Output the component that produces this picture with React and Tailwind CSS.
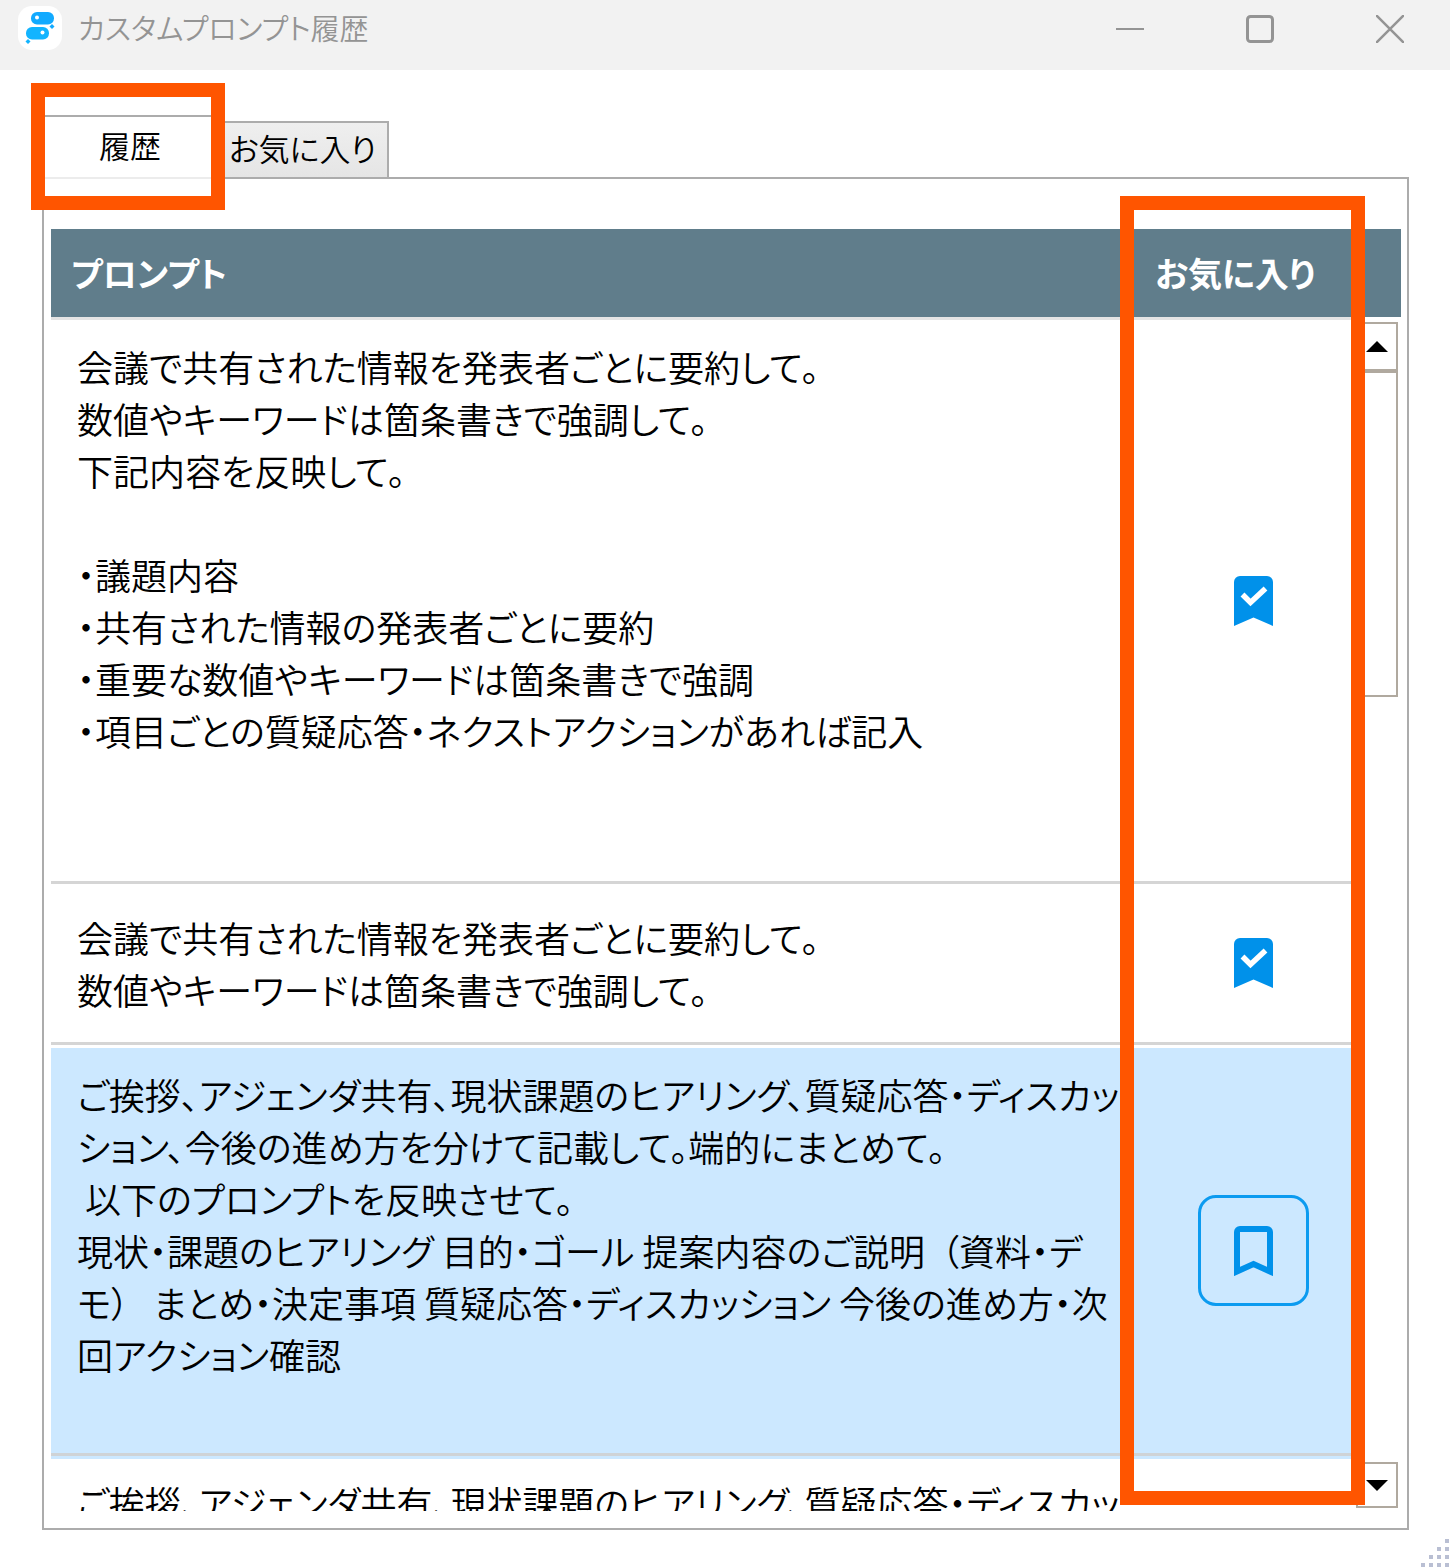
import { useState } from 'react'

const PROMPTS = [
  {
    id: 1,
    favorite: true,
    text: `会議で共有された情報を発表者ごとに要約して。
数値やキーワードは箇条書きで強調して。
下記内容を反映して。

・議題内容
・共有された情報の発表者ごとに要約
・重要な数値やキーワードは箇条書きで強調
・項目ごとの質疑応答・ネクストアクションがあれば記入

\u200b`,
  },
  {
    id: 2,
    favorite: true,
    text: `会議で共有された情報を発表者ごとに要約して。
数値やキーワードは箇条書きで強調して。`,
  },
  {
    id: 3,
    favorite: false,
    text: `ご挨拶、アジェンダ共有、現状課題のヒアリング、質疑応答・ディスカッ
ション、今後の進め方を分けて記載して。端的にまとめて。
 以下のプロンプトを反映させて。
現状・課題のヒアリング 目的・ゴール 提案内容のご説明  （資料・デ
モ）   まとめ・決定事項 質疑応答・ディスカッション 今後の進め方・次
回アクション確認
\u200b`,
  },
  {
    id: 4,
    favorite: false,
    text: `ご挨拶、アジェンダ共有、現状課題のヒアリング、質疑応答・ディスカッ

\u200b`,
  },
]

function AppIcon() {
  return (
    <svg width="44" height="44" viewBox="0 0 44 44" aria-hidden="true">
      <rect width="44" height="44" rx="14" fill="#fff" />
      <rect x="13" y="6" width="23" height="12.5" rx="6" fill="#12aaff" />
      <rect x="8" y="21" width="23" height="12.5" rx="6" fill="#12b4ff" />
      <circle cx="19" cy="11.5" r="2" fill="#fff" />
      <circle cx="24.5" cy="26.5" r="2" fill="#fff" />
      <path d="M34 18l2.5 2.5L34 23l-2.5-2.5Z" fill="#12aaff" />
      <path d="M10 33l2.5 2.5L10 38l-2.5-2.5Z" fill="#12b4ff" />
    </svg>
  )
}

function Bookmark({ filled }) {
  return (
    <svg width="39" height="50" viewBox="0 0 39 50" aria-hidden="true">
      {filled ? (
        <>
          <path d="M0 50V6a6 6 0 0 1 6-6h27a6 6 0 0 1 6 6v44L19.5 41.5Z" fill="#0091ea" />
          <path d="M8.5 18.5l8 8L31.5 12.5" fill="none" stroke="#fff" strokeWidth="5.5" />
        </>
      ) : (
        <path
          d="M3 45.5V6a3 3 0 0 1 3-3h27a3 3 0 0 1 3 3v39.5L19.5 38Z"
          fill="none"
          stroke="#0091ea"
          strokeWidth="6"
        />
      )}
    </svg>
  )
}

function TitleBar() {
  return (
    <header className="flex h-[70px] shrink-0 items-start justify-between bg-[#f2f2f2] pt-[6px] pr-[28px] pl-[18px] text-[#949494]">
      <div className="flex items-center gap-[16px]">
        <AppIcon />
        <h1 className="pb-[2px] text-[29px] leading-[42px] font-[350]">カスタムプロンプト履歴</h1>
      </div>
      <div className="flex h-[46px] items-center gap-[66px]">
        <button type="button" aria-label="最小化" className="flex w-[64px] justify-center">
          <svg width="28" height="28" viewBox="0 0 28 28" stroke="currentColor" strokeWidth="2">
            <path d="M0 14h28" />
          </svg>
        </button>
        <button type="button" aria-label="最大化" className="flex w-[64px] justify-center">
          <svg width="28" height="28" viewBox="0 0 28 28" fill="none" stroke="currentColor" strokeWidth="3">
            <rect x="1.5" y="1.5" width="25" height="25" rx="3" />
          </svg>
        </button>
        <button type="button" aria-label="閉じる" className="flex w-[64px] justify-center">
          <svg width="28" height="28" viewBox="0 0 28 28" stroke="currentColor" strokeWidth="2.5">
            <path d="M0 0l28 28M28 0L0 28" />
          </svg>
        </button>
      </div>
    </header>
  )
}

function Tabs({ tab, onChange }) {
  return (
    <div role="tablist" className="flex items-end">
      <div className="relative">
        <button
          type="button"
          role="tab"
          aria-selected={tab === 'history'}
          onClick={() => onChange('history')}
          className="block h-[62px] w-[176px] border-2 border-b-0 border-[#acacac] bg-white pb-[4px] text-[31px] leading-[56px] font-[350]"
        >
          履歴
        </button>
        <div className="absolute inset-x-[2px] -bottom-[2px] h-[2px] bg-[#ececec]" />
        <div className="pointer-events-none absolute -top-[32px] -right-[7px] -bottom-[33px] -left-[11px] z-10 border-14 border-[#ff5500]" />
      </div>
      <button
        type="button"
        role="tab"
        aria-selected={tab === 'favorites'}
        onClick={() => onChange('favorites')}
        className="h-[56px] w-[171px] border-2 border-b-0 border-l-0 border-[#acacac] bg-linear-to-b from-[#efefef] to-[#e5e5e5] pb-[4px] text-[31px] leading-[50px] font-[350]"
      >
        お気に入り
      </button>
    </div>
  )
}

function ScrollBar() {
  return (
    <div className="absolute top-[93px] right-[3px] bottom-[3px] flex w-[42px] flex-col">
      <button
        type="button"
        aria-label="上へスクロール"
        className="flex h-[49px] items-center justify-center border-2 border-[#b0a99f]"
      >
        <svg width="22" height="11" viewBox="0 0 22 11">
          <path d="M0 11L11 0l11 11Z" />
        </svg>
      </button>
      <div className="h-[326px] border-2 border-[#b0a99f]" />
      <button
        type="button"
        aria-label="下へスクロール"
        className="mt-auto flex h-[46px] items-center justify-center border-2 border-[#b0a99f]"
      >
        <svg width="22" height="11" viewBox="0 0 22 11">
          <path d="M0 0h22L11 11Z" />
        </svg>
      </button>
    </div>
  )
}

function PromptRow({ prompt, selected, onSelect, onToggle }) {
  const cell = selected
    ? 'border-t-3 border-b-3 border-t-white border-b-[#cfd3d6] bg-[#cce8ff] shadow-[0_3px_0_#cce8ff]'
    : 'border-b-3 border-[#d5d5d5]'
  return (
    <tr onClick={onSelect}>
      <td className={`h-[161px] pt-[20px] pb-[21px] pl-[26px] align-middle ${cell}`}>
        <p className="text-[36px] leading-[52px] font-[350] whitespace-pre">{prompt.text}</p>
      </td>
      <td className={`align-middle ${cell}`}>
        <button
          type="button"
          aria-label="お気に入り"
          aria-pressed={prompt.favorite}
          onClick={onToggle}
          className={`mx-auto flex size-[111px] items-center justify-center rounded-[18px] ${
            selected ? 'border-3 border-[#0c9bf0]' : ''
          }`}
        >
          {(prompt.favorite || selected) && <Bookmark filled={prompt.favorite} />}
        </button>
      </td>
      <td />
    </tr>
  )
}

export default function App() {
  const [tab, setTab] = useState('history')
  const [prompts, setPrompts] = useState(PROMPTS)
  const [selectedId, setSelectedId] = useState(3)

  function toggleFavorite(id) {
    setPrompts((list) => list.map((p) => (p.id === id ? { ...p, favorite: !p.favorite } : p)))
  }

  return (
    <div
      lang="ja"
      className="relative flex h-screen flex-col bg-white font-['Noto_Sans_CJK_JP',sans-serif] text-black [font-feature-settings:'palt']"
    >
      <TitleBar />
      <main className="flex min-h-0 flex-1 flex-col pt-[45px] pr-[41px] pb-[37px] pl-[42px]">
        <Tabs tab={tab} onChange={setTab} />
        <section className="flex min-h-0 flex-1 flex-col border-2 border-[#acacac] pt-[50px] pr-[6px] pb-[17px] pl-[7px]">
          <div className="relative min-h-0 flex-1">
            <div className="h-full overflow-hidden">
              <table className="w-full table-fixed border-separate border-spacing-0">
                <colgroup>
                  <col />
                  <col className="w-[197px]" />
                  <col className="w-[49px]" />
                </colgroup>
                <thead>
                  <tr className="text-left text-[34px] leading-[52px] text-white">
                    <th className="h-[91px] border-b-3 border-[#e4e4e4] bg-[#607d8b] pl-[20px] font-bold">
                      プロンプト
                    </th>
                    <th className="border-b-3 border-[#e4e4e4] bg-[#607d8b] font-bold">お気に入り</th>
                    <td className="border-b-3 border-white bg-[#607d8b]" />
                  </tr>
                </thead>
                <tbody>
                  {prompts.map((p) => (
                    <PromptRow
                      key={p.id}
                      prompt={p}
                      selected={p.id === selectedId}
                      onSelect={() => setSelectedId(p.id)}
                      onToggle={() => toggleFavorite(p.id)}
                    />
                  ))}
                </tbody>
              </table>
            </div>
            <ScrollBar />
            {/* highlight frame over the favorites column */}
            <div className="pointer-events-none absolute -top-[33px] right-[36px] bottom-[6px] w-[245px] border-14 border-[#ff5500]" />
          </div>
        </section>
      </main>
      <svg className="absolute right-0 bottom-0" width="30" height="28" viewBox="0 0 30 28" fill="#b9bfd3">
        {[0, 1, 2, 3].map((row) =>
          Array.from({ length: row + 1 }, (_, i) => (
            <rect key={`${row}-${i}`} x={25 - i * 8} y={row * 8} width="4" height="4" />
          ))
        )}
      </svg>
    </div>
  )
}
